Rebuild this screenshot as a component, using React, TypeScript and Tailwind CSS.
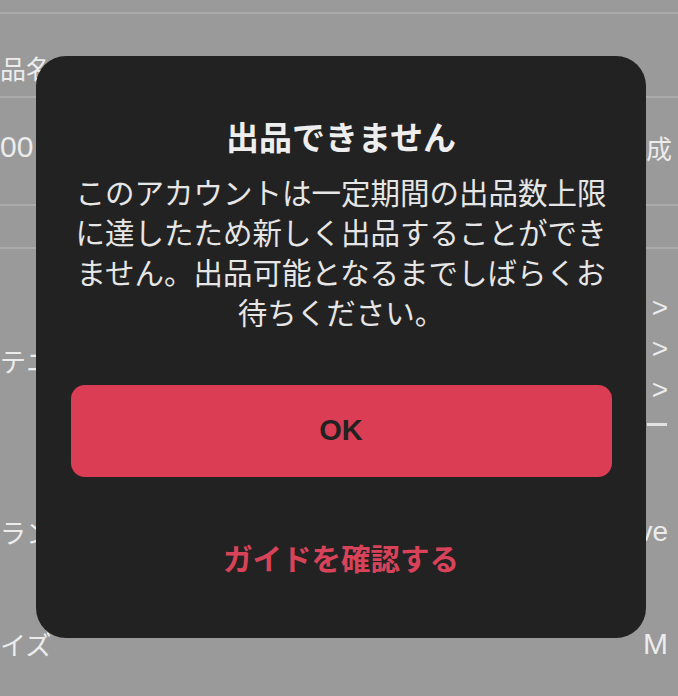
const jp = "font-['Noto_Sans_CJK_JP','Noto_Sans',sans-serif]";
const latin = "font-['Liberation_Sans',sans-serif]";

function Background() {
    return (
        <div className={`flex h-full flex-col text-[26px] leading-[32px] text-[#ececec] ${jp}`}>
            <div className="h-[14px] border-b-2 border-[#ababab]" />
            {/* 商品名 */}
            <div className="h-[84px] border-b-2 border-[#ababab] pt-[38px]">
                <span>品名</span>
            </div>
            <div className="flex h-[108px] justify-between border-b-2 border-[#ababab] pr-[6px] pt-[33px]">
                <span className={`${latin} text-[30px]`}>00</span>
                <span className="mt-[1px]">成</span>
            </div>
            <div className="h-[43px] border-b-2 border-[#ababab]" />
            <div className="flex justify-between pr-[10px]">
                <span className="mt-[96px]">テニ</span>
                <div className={`mt-[38px] flex flex-col items-end text-[28px] leading-[41px] ${latin}`}>
                    <span>&gt;</span>
                    <span>&gt;</span>
                    <span>&gt;</span>
                </div>
            </div>
            <div className="mt-[13px] flex justify-end pr-[11px]">
                <div className="h-[3px] w-[20px] bg-[#e2e2e2]" />
            </div>
            <div className="mt-[90px] flex justify-between pr-[10px]">
                <span>ラン</span>
                <span className={`${latin} text-[28px]`}>ve</span>
            </div>
            <div className="mt-[80px] flex justify-between pr-[10px]">
                <span>イズ</span>
                <span className={`${latin} text-[30px]`}>M</span>
            </div>
        </div>
    );
}

export default function App() {
    return (
        <div className="relative h-[696px] w-[678px] overflow-hidden bg-[#9a9a9a]">
            <Background />
            {/* ダイアログ */}
            <div
                className={`absolute left-[36px] top-[56px] flex h-[582px] w-[610px] flex-col items-center rounded-[30px] bg-[#222222] px-[34px] ${jp}`}>
                <h2 className="mt-[60px] text-[33px] font-semibold leading-[40px] text-[#eeeeee]">出品できません</h2>
                <p className="mt-[15px] w-[541px] text-center text-[29.5px] leading-[40px] text-[#e6e6e6]">
                    このアカウントは一定期間の出品数上限に達したため新しく出品することができません。出品可能となるまでしばらくお待ちください。
                </p>
                <button
                    type="button"
                    className={`mt-[54px] flex h-[92px] w-[541px] shrink-0 items-center justify-center rounded-[14px] bg-[#db3d54] text-[29px] font-bold text-[#222222] ${latin}`}>
                    OK
                </button>
                <button type="button" className="mt-[60px] text-[29.5px] font-semibold leading-[40px] text-[#d8435a]">
                    ガイドを確認する
                </button>
            </div>
        </div>
    );
}
